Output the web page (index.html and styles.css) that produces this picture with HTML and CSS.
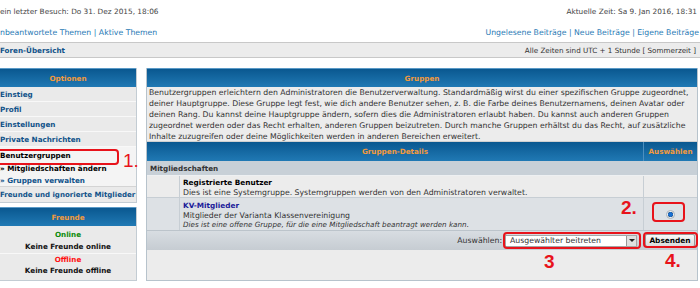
FILE: index.html
```html
<!DOCTYPE html>
<html lang="de">
<head>
<meta charset="utf-8">
<title>Gruppen</title>
<link rel="stylesheet" href="styles.css">
</head>
<body>
<div class="page">
  <div class="topline">
    <span>ein letzter Besuch: Do 31. Dez 2015, 18:06</span>
    <span>Aktuelle Zeit: Sa 9. Jan 2016, 18:31</span>
  </div>
  <div class="linkline">
    <span><a href="#">nbeantwortete Themen</a> | <a href="#">Aktive Themen</a></span>
    <span><a href="#">Ungelesene Beiträge</a> | <a href="#">Neue Beiträge</a> | <a href="#">Eigene Beiträge</a></span>
  </div>
  <div class="navbar">
    <a href="#" class="crumb">Foren-Übersicht</a>
    <span>Alle Zeiten sind UTC + 1 Stunde [ Sommerzeit ]</span>
  </div>

  <div class="content">
    <aside class="side">
      <div class="box">
        <div class="cap">Optionen</div>
        <a class="item" href="#">Einstieg</a>
        <a class="item" href="#">Profil</a>
        <a class="item" href="#">Einstellungen</a>
        <a class="item" href="#">Private Nachrichten</a>
        <div class="active">
          <div class="act-title">Benutzergruppen</div>
          <div class="sub cur">» Mitgliedschaften ändern</div>
          <a class="sub" href="#">» Gruppen verwalten</a>
        </div>
        <a class="item last" href="#">Freunde und ignorierte Mitglieder</a>
      </div>
      <div class="box friends">
        <div class="cap">Freunde</div>
        <div class="fr-online">Online</div>
        <div class="fr-none">Keine Freunde online</div>
        <div class="fr-offline">Offline</div>
        <div class="fr-none">Keine Freunde offline</div>
      </div>
    </aside>

    <main class="main">
      <div class="cap">Gruppen</div>
      <div class="desc">Benutzergruppen erleichtern den Administratoren die Benutzerverwaltung. Standardmäßig wirst du einer spezifischen Gruppe zugeordnet,<br>deiner Hauptgruppe. Diese Gruppe legt fest, wie dich andere Benutzer sehen, z. B. die Farbe deines Benutzernamens, deinen Avatar oder<br>deinen Rang. Du kannst deine Hauptgruppe ändern, sofern dies die Administratoren erlaubt haben. Du kannst auch anderen Gruppen<br>zugeordnet werden oder das Recht erhalten, anderen Gruppen beizutreten. Durch manche Gruppen erhältst du das Recht, auf zusätzliche<br>Inhalte zuzugreifen oder deine Möglichkeiten werden in anderen Bereichen erweitert.</div>
      <div class="thead">
        <div class="th-main">Gruppen-Details</div>
        <div class="th-sel">Auswählen</div>
      </div>
      <div class="section">Mitgliedschaften</div>
      <div class="row row1">
        <div class="c-icon"></div>
        <div class="c-body">
          <div class="g-title">Registrierte Benutzer</div>
          <div class="g-text">Dies ist eine Systemgruppe. Systemgruppen werden von den Administratoren verwaltet.</div>
        </div>
        <div class="c-sel"></div>
      </div>
      <div class="row row2">
        <div class="c-icon"></div>
        <div class="c-body">
          <a href="#" class="g-title g-link">KV-Mitglieder</a>
          <div class="g-text">Mitglieder der Varianta Klassenvereinigung</div>
          <div class="g-it">Dies ist eine offene Gruppe, für die eine Mitgliedschaft beantragt werden kann.</div>
        </div>
        <div class="c-sel"><span class="radio"></span></div>
      </div>
      <div class="foot">
        <span class="lbl">Auswählen:</span>
        <div class="select"><span>Ausgewählter beitreten</span><span class="arrow"></span></div>
        <button class="btn">Absenden</button>
      </div>
    </main>
  </div>

  <div class="mark m-rect1"></div>
  <div class="mark m-rect2"></div>
  <div class="mark m-rect3"></div>
  <div class="mark m-rect4"></div>
  <span class="num n1">1.</span>
  <span class="num n2">2.</span>
  <span class="num n3">3</span>
  <span class="num n4">4.</span>
</div>
</body>
</html>
```
FILE: styles.css
```css
* { box-sizing: border-box; }
html, body { margin: 0; padding: 0; background: #fff; }
body {
  font-family: "DejaVu Sans", Verdana, sans-serif;
  font-size: 7.2px;
  color: #333;
  width: 700px;
  height: 288px;
  overflow: hidden;
}
a { text-decoration: none; color: #2a7ab5; }
.page { position: relative; width: 700px; height: 288px; overflow: hidden; }

.topline, .linkline {
  display: flex;
  justify-content: space-between;
  white-space: nowrap;
}
.topline { height: 22px; padding-top: 7px; padding-right: 3px; color: #444; font-size: 7.35px; }
.linkline { height: 20px; padding-top: 6px; padding-right: 1px; color: #2a7ab5; font-size: 7.75px; }

.navbar {
  height: 16px;
  background: #ececec;
  border-top: 1px solid #c8c8c8;
  border-bottom: 1px solid #c8c8c8;
  display: flex;
  justify-content: space-between;
  align-items: center;
  padding-right: 4px;
  white-space: nowrap;
}
.crumb { font-weight: bold; color: #105289; }

.content {
  display: flex;
  gap: 9px;
  margin-top: 10px;
  padding-right: 2px;
}

.side { width: 137px; flex: none; display: flex; flex-direction: column; gap: 4px; }
.box {
  background: #eaeaea;
  border-right: 1px solid #c3ccd3;
  border-bottom: 1px solid #c3ccd3;
}
.cap {
  height: 19px;
  line-height: 19px;
  text-align: center;
  font-weight: bold;
  color: #f39a3c;
  background: linear-gradient(#0a5890, #2079b4);
  border-top: 1px solid #5a9ac7;
}
.side .item {
  display: block;
  height: 15px;
  line-height: 15px;
  font-weight: bold;
  color: #105289;
  border-bottom: 1px solid #f8f8f8;
  white-space: nowrap;
}
.side .item.last { border-bottom: 0; height: 15px; font-size: 7.05px; }
.active {
  background: #f4f4f4;
  height: 40px;
  padding-top: 3px;
  border-bottom: 1px solid #d4d4d4;
}
.act-title, .sub {
  display: block;
  font-weight: bold;
  height: 12px;
  line-height: 12px;
  white-space: nowrap;
}
.act-title { color: #000; height: 13px; }
.sub.cur { color: #000; }
.sub { color: #105289; }

.friends { text-align: center; font-weight: bold; padding-bottom: 3px; }
.fr-online { color: #0a8a0a; margin-top: 3px; line-height: 12px; }
.fr-offline { color: #ff1010; line-height: 11px; border-top: 1px solid #f8f8f8; margin-top: 0; }
.fr-none { color: #111; line-height: 12px; }

.main {
  flex: 1;
  min-width: 0;
  overflow: hidden;
  border: 1px solid #b7c3cc;
  border-top: 0;
  background: #ececec;
}
.desc {
  font-size: 7.75px;
  line-height: 11px;
  padding: 0 2px 0 2px;
  white-space: nowrap;
  color: #333;
  height: 55px;
  border-bottom: 1px solid #d0d0d0;
}
.thead {
  display: flex;
  height: 19px;
  line-height: 19px;
  font-weight: bold;
  color: #f39a3c;
  background: linear-gradient(#0a5890, #2079b4);
}
.th-main { flex: 1; text-align: center; }
.th-sel { width: 54px; text-align: center; border-left: 1px solid #4d8fbf; }
.section {
  height: 15px;
  line-height: 15px;
  background: #c8d0d7;
  font-weight: bold;
  color: #333;
  padding-left: 3px;
  border-bottom: 1px solid #eef0f2;
}
.row { display: flex; }
.row1 { height: 22px; background: #ececec; border-bottom: 1px solid #c7ced4; }
.row2 { height: 32px; background: #dde1e5; }
.c-icon { width: 33px; border-right: 1px solid #c7ced4; }
.c-body { flex: 1; min-width: 0; padding: 2px 0 0 3px; line-height: 9px; white-space: nowrap; }
.row2 .c-body { padding-top: 3px; }
.c-sel { width: 54px; border-left: 1px solid #c7ced4; display: flex; align-items: center; justify-content: center; }
.g-title { display: block; font-weight: bold; color: #000; line-height: 10px; font-size: 7.3px; }
.g-link { color: #1a1a99; }
.g-text { color: #333; font-size: 7.75px; }
.g-it { color: #333; font-style: italic; }
.radio {
  width: 9px; height: 9px; border-radius: 50%;
  background: radial-gradient(circle, #1a6fd0 0 2px, #2c4f70 2.5px, #e9edf0 3px, #f4f6f7 100%);
  border: 1px solid #a8b0b8;
  margin-left: -1px;
}

.foot {
  height: 20px;
  background: linear-gradient(#d8dde2, #c6ccd2);
  border-top: 1px solid #bcc4cb;
  display: flex;
  justify-content: flex-end;
  align-items: center;
  padding-right: 2px;
  gap: 3px;
}
.lbl { color: #333; font-size: 7.75px; }
.select {
  width: 132px; height: 12px;
  background: #fff;
  border: 1px solid #a5a5a5;
  display: flex; justify-content: space-between; align-items: center;
  padding-left: 4px;
  color: #333;
  font-size: 7.75px;
  margin-right: 5px;
}
.arrow {
  width: 10px; height: 10px;
  background: #e0e0e0;
  border-left: 1px solid #999;
  position: relative;
}
.arrow::after {
  content: ""; position: absolute; left: 2px; top: 3px;
  border-left: 3px solid transparent; border-right: 3px solid transparent;
  border-top: 3px solid #222;
}
.btn {
  font-family: inherit; font-size: 7.4px; font-weight: bold; color: #000;
  height: 13px; width: 50px; padding: 0;
  background: linear-gradient(#f8f8f8, #dcdcdc);
  border: 1px solid #999;
  border-radius: 2px;
}

.mark { position: absolute; border: 2px solid #e8131b; border-radius: 4px; }
.m-rect1 { left: -4px; top: 149px; width: 123px; height: 16px; }
.m-rect2 { left: 652px; top: 202px; width: 33px; height: 20px; }
.m-rect3 { left: 503px; top: 232px; width: 138px; height: 17px; }
.m-rect4 { left: 643px; top: 232px; width: 55px; height: 16px; }
.num {
  position: absolute;
  font-family: "Liberation Sans", Arial, sans-serif;
  font-weight: bold;
  font-size: 19px;
  line-height: 19px;
  color: #e8131b;
}
.n1 { left: 123px; top: 151px; font-weight: normal; }
.n2 { left: 621px; top: 198px; }
.n3 { left: 544px; top: 252px; }
.n4 { left: 665px; top: 251px; }
```
